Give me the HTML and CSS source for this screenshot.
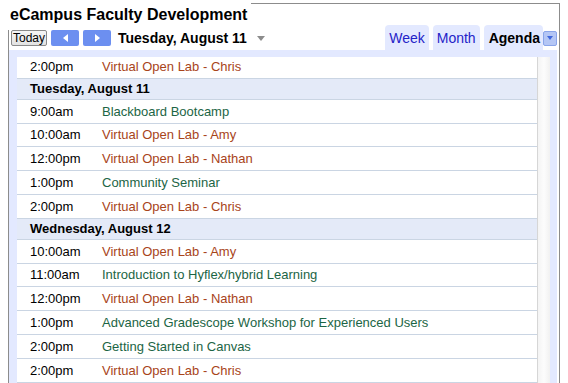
FILE: index.html
```html
<!DOCTYPE html>
<html lang="en">
<head>
  <meta charset="UTF-8" />
  <title>eCampus Faculty Development</title>
  <link rel="stylesheet" href="styles.css">
</head>
<body>
  <div class="frame">
    <div class="title">eCampus Faculty Development</div>

    <div class="toolbar">
      <div class="nav">
        <button class="today">Today</button>
        <button class="arrow"><span class="tri-left"></span></button>
        <button class="arrow"><span class="tri-right"></span></button>
        <span class="date-range">Tuesday, August 11</span>
        <span class="date-drop"></span>
      </div>
      <div class="tabs">
        <div class="tab">Week</div>
        <div class="tab">Month</div>
        <div class="tab active">Agenda</div>
        <div class="tab-menu"><span class="tri-down"></span></div>
      </div>
    </div>

    <div class="view">
      <div class="list">
        <div class="scroll">
          <div class="row"><span class="time">2:00pm</span><span class="event lab">Virtual Open Lab - Chris</span></div>
          <div class="day">Tuesday, August 11</div>
          <div class="row"><span class="time">9:00am</span><span class="event">Blackboard Bootcamp</span></div>
          <div class="row"><span class="time">10:00am</span><span class="event lab">Virtual Open Lab - Amy</span></div>
          <div class="row"><span class="time">12:00pm</span><span class="event lab">Virtual Open Lab - Nathan</span></div>
          <div class="row"><span class="time">1:00pm</span><span class="event">Community Seminar</span></div>
          <div class="row"><span class="time">2:00pm</span><span class="event lab">Virtual Open Lab - Chris</span></div>
          <div class="day">Wednesday, August 12</div>
          <div class="row"><span class="time">10:00am</span><span class="event lab">Virtual Open Lab - Amy</span></div>
          <div class="row"><span class="time">11:00am</span><span class="event">Introduction to Hyflex/hybrid Learning</span></div>
          <div class="row"><span class="time">12:00pm</span><span class="event lab">Virtual Open Lab - Nathan</span></div>
          <div class="row"><span class="time">1:00pm</span><span class="event">Advanced Gradescope Workshop for Experienced Users</span></div>
          <div class="row"><span class="time">2:00pm</span><span class="event">Getting Started in Canvas</span></div>
          <div class="row"><span class="time">2:00pm</span><span class="event lab">Virtual Open Lab - Chris</span></div>
        </div>
        <div class="scrollbar"></div>
      </div>
    </div>
  </div>
</body>
</html>
```

FILE: styles.css
```css
* { box-sizing: border-box; }
html, body { margin: 0; padding: 0; height: 100%; overflow: hidden; }
body {
  font-family: "Liberation Sans", Arial, Helvetica, sans-serif;
  color: #000; background: #fff;
}
.frame {
  margin: 3px 0 0 8px; width: 552px; height: 400px;
  border: 1px solid #8c8c8c; border-bottom: none;
  display: flex; flex-direction: column;
}
.title {
  position: relative;
  align-self: flex-start;
  margin: -4px 0 0 -2px; padding: 5px 4px 0 3px; height: 30px;
  background: #fff; font-size: 16px; font-weight: bold; line-height: 20px;
}
.toolbar {
  height: 25px; margin-top: -5px;
  display: flex; justify-content: space-between; align-items: stretch;
}
.nav { position: relative; display: flex; align-items: center; gap: 4px; padding: 0 0 0 2px; }
.today {
  height: 16px; width: 36px; padding: 0;
  font: 12px "Liberation Sans", Arial, sans-serif; color: #000;
  border: 1px solid #8a8a8a; border-radius: 2px;
  background: linear-gradient(#f6f6f6, #e2e2e2);
}
.arrow {
  width: 28px; height: 16px; padding: 0; border: none; border-radius: 2px;
  background: #6c8ff0; display: flex; align-items: center; justify-content: center;
}
.tri-left, .tri-right { width: 0; height: 0; border-top: 4px solid transparent; border-bottom: 4px solid transparent; }
.tri-left { border-right: 5px solid #fff; }
.tri-right { border-left: 5px solid #fff; }
.date-range { font-size: 14px; font-weight: bold; margin-left: 3px; }
.date-drop {
  width: 0; height: 0; margin-left: 6px; margin-top: 1px;
  border-left: 4px solid transparent; border-right: 4px solid transparent; border-top: 5px solid #8c8c8c;
}
.tabs { display: flex; align-items: flex-end; gap: 4px; padding-right: 2px; }
.tab {
  height: 25px; padding: 0 4px; line-height: 27px; font-size: 14px;
  color: #2323c8; background: #e3e9ff; border-radius: 4px 4px 0 0;
}
.tab.active { color: #000; font-weight: bold; padding: 0 3px 0 5px; }
.tab-menu {
  align-self: center; width: 14px; height: 15px; margin-left: -4px; margin-top: 1px;
  background: #b4c6f5; border: 1px solid #8aa5ea; border-radius: 2px;
  display: flex; align-items: center; justify-content: center;
}
.tri-down { width: 0; height: 0; border-left: 3px solid transparent; border-right: 3px solid transparent; border-top: 4px solid #3f66dc; }
.view {
  flex: 1; background: #e3e9ff; margin-right: 2px;
  padding: 7px 7px 0 8px; display: flex;
}
.list { flex: 1; display: flex; background: #fff; overflow: hidden; }
.scroll { flex: 1; overflow: hidden; border-right: 1px solid #d6d6d6; }
.scroll > :first-child { margin-top: -2px; }
.scrollbar { width: 12px; background: linear-gradient(to right, #f4f4f4, #fcfcfc 50%, #f1f1f1); }
.row {
  height: 23.8px; display: flex; align-items: center;
  padding-left: 13px; font-size: 13px; border-bottom: 1px solid #cad5e3;
}
.time { width: 72px; flex-shrink: 0; }
.event { color: #1c6545; }
.event.lab { color: #a8441a; }
.day {
  height: 21px; line-height: 20px; padding-left: 13px;
  font-size: 13px; font-weight: bold;
  background: #e4eaf8; border-bottom: 1px solid #cad5e3;
}
```
